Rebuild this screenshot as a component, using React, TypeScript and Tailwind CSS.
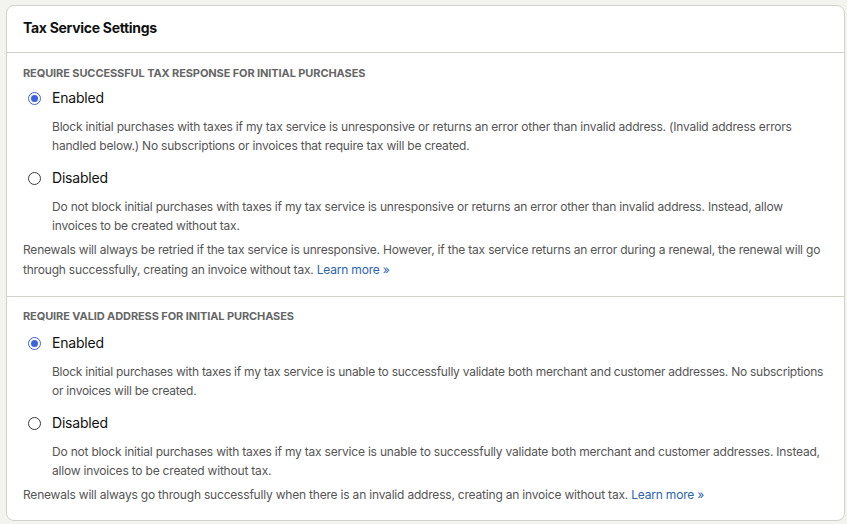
import React from "react";

function Radio({ checked, label }: { checked: boolean; label: string }) {
  return (
    <div className="flex items-center h-5 pl-[5px]">
      {checked ? (
        <span className="w-[13px] h-[13px] rounded-full border-[1.5px] border-[#3d63dd] flex items-center justify-center bg-white">
          <span className="w-[7px] h-[7px] rounded-full bg-[#3d63dd]" />
        </span>
      ) : (
        <span className="w-[13px] h-[13px] rounded-full border border-[#3a3a3a] bg-white" />
      )}
      <span className="ml-[11px] text-[14px] text-[#111] leading-5 tracking-[-0.2px]">{label}</span>
    </div>
  );
}

function Desc({ children, tight }: { children: React.ReactNode; tight?: boolean }) {
  return (
    <p className={"pl-[29px] text-[12px] leading-[19px] text-[#555] " + (tight ? "tracking-[-0.25px]" : "tracking-[-0.2px]")}>
      {children}
    </p>
  );
}

export default function App() {
  return (
    <div className="min-h-[524px] bg-[#f3f3ef] pt-[5px] pl-[6px] pr-[2px] pb-[4px]" style={{ fontFamily: "Inter, 'Noto Sans', sans-serif" }}>
      <div className="bg-white border border-[#d3d2c9] rounded-[8px]">
        <div className="h-[47px] flex items-center px-[16px] pb-[3px] border-b border-[#d3d2c9]">
          <h1 className="text-[14px] font-bold text-[#111] tracking-[-0.3px]">Tax Service Settings</h1>
        </div>
        <div className="px-[16px] pt-[12px] pb-[16px] border-b border-[#d3d2c9]">
          <div className="text-[11px] leading-4 font-bold uppercase text-[#666] tracking-[-0.1px]">Require successful tax response for initial purchases</div>
          <div className="mt-[7px]">
            <Radio checked label="Enabled" />
          </div>
          <div className="mt-[9px]">
            <Desc>
              Block initial purchases with taxes if my tax service is unresponsive or returns an error other than invalid address. (Invalid address errors handled below.) No subscriptions or invoices that require tax will be created.
            </Desc>
          </div>
          <div className="mt-[13px]">
            <Radio checked={false} label="Disabled" />
          </div>
          <div className="mt-[9px]">
            <Desc>
              Do not block initial purchases with taxes if my tax service is unresponsive or returns an error other than invalid address. Instead, allow invoices to be created without tax.
            </Desc>
          </div>
          <p className="mt-[5px] text-[12px] leading-5 text-[#555] tracking-[-0.2px]">
            Renewals will always be retried if the tax service is unresponsive. However, if the tax service returns an error during a renewal, the renewal will go through successfully, creating an invoice without tax.{" "}
            <a className="text-[#2a64b0]">Learn more »</a>
          </p>
        </div>
        <div className="px-[16px] pt-[11px] pb-[15px]">
          <div className="text-[11px] leading-4 font-bold uppercase text-[#666] tracking-[-0.1px]">Require valid address for initial purchases</div>
          <div className="mt-[9px]">
            <Radio checked label="Enabled" />
          </div>
          <div className="mt-[9px]">
            <Desc tight>
              Block initial purchases with taxes if my tax service is unable to successfully validate both merchant and customer addresses. No subscriptions or invoices will be created.
            </Desc>
          </div>
          <div className="mt-[13px]">
            <Radio checked={false} label="Disabled" />
          </div>
          <div className="mt-[9px]">
            <Desc>
              Do not block initial purchases with taxes if my tax service is unable to successfully validate both merchant and customer addresses. Instead, allow invoices to be created without tax.
            </Desc>
          </div>
          <p className="mt-[5px] text-[12px] leading-5 text-[#555] tracking-[-0.2px]">
            Renewals will always go through successfully when there is an invalid address, creating an invoice without tax.{" "}
            <a className="text-[#2a64b0]">Learn more »</a>
          </p>
        </div>
      </div>
    </div>
  );
}
